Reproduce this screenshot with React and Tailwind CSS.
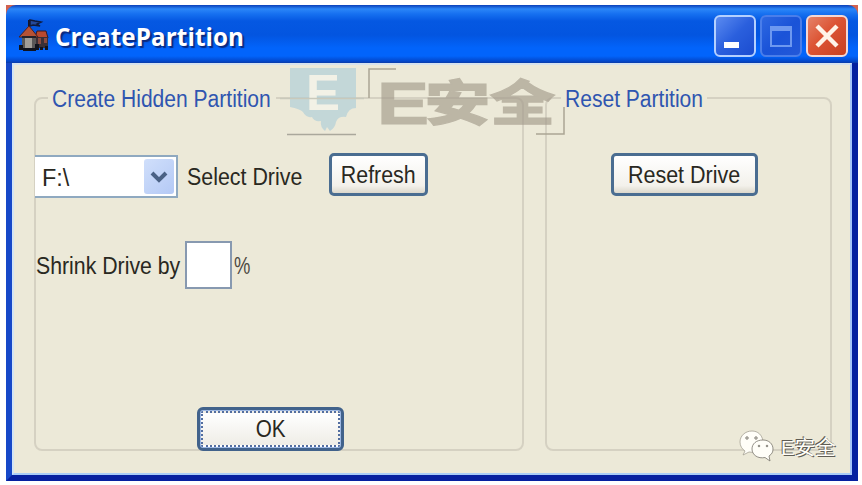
import React from 'react';

const sans = "font-['Liberation_Sans',Arial,sans-serif]";

function Label({ children, className = '' }) {
  return (
    <span className={`inline-block origin-left whitespace-nowrap text-[23px] leading-[26px] ${className}`}>
      {children}
    </span>
  );
}

function CastleIcon() {
  return (
    <svg className="ml-[12px] mt-[13px] h-[34px] w-[32px] shrink-0" viewBox="0 0 32 34">
      <path d="M11 2v8" stroke="#15152c" strokeWidth="2" />
      <path d="M12 2l5 1 6 1-4 2 3 2-7-1-3 1z" fill="#254a9c" stroke="#101a3c" strokeWidth="1.5" />
      <path d="M17 20l2-7h9l2 7z" fill="#b9492f" stroke="#3b1820" />
      <path d="M18 19h12v11H18z" fill="#3a3038" />
      <path d="M20 20h3v6h-3zM26 20h3v5h-3z" fill="#8b4b40" />
      <path d="M11 8l9 11H1z" fill="#b65236" stroke="#4b2023" />
      <path d="M4 19h14v12H4z" fill="#5a5758" />
      <path d="M7 19h7v12H7z" fill="#a29d98" />
      <path d="M4 19h14" stroke="#25222a" strokeWidth="2" />
      <path d="M1 27h4v5H1zM5 30h13v3H5zM17 26h4v6h-4zM22 29h3v3h-3zM27 28h3v4h-3z" fill="#11131e" />
    </svg>
  );
}

function TitleBar() {
  return (
    <header className="flex h-[58px] shrink-0 rounded-t-[10px] bg-[linear-gradient(180deg,#0a3fb8_0px,#2b86f8_4px,#1670f0_9px,#0558e2_16px,#0355e0_30px,#0264fb_43px,#0264fb_51px,#0348cc_56px,#0b3ba8_58px)]">
      <CastleIcon />
      <h1 className="ml-[5px] mt-[14px] inline-block origin-left scale-x-[0.968] whitespace-nowrap font-['Open_Sans',sans-serif] text-[25px] font-bold leading-[34px] tracking-[0.1px] text-white [text-shadow:2px_2px_1px_#0a2a80]">
        CreatePartition
      </h1>
      <div className="ml-auto mr-[10px] mt-[10px] flex gap-[4px]">
        <div className="h-[42px] w-[42px] rounded-[6px] border-2 border-[#b4d0ff] bg-[linear-gradient(135deg,#5b8bf0,#2a5fdd_50%,#1b4cd0)]">
          <svg className="h-[38px] w-[38px]" viewBox="0 0 38 38"><path d="M8 25h15v6H8z" fill="#fff" /></svg>
        </div>
        <div className="h-[42px] w-[42px] rounded-[6px] border-2 border-[#4a7eea] bg-[linear-gradient(135deg,#2d68e2,#1a53d8_50%,#2358d8)]">
          <svg className="h-[38px] w-[38px]" viewBox="0 0 38 38"><path d="M9 10h20v19H9z" fill="none" stroke="#6d98f0" strokeWidth="2" /><path d="M8 9h22v5H8z" fill="#6d98f0" /></svg>
        </div>
        <div className="h-[42px] w-[42px] rounded-[6px] border-2 border-[#f4d8d4] bg-[linear-gradient(135deg,#e58368,#dc5434_45%,#c9401f)]">
          <svg className="h-[38px] w-[38px]" viewBox="0 0 38 38"><path d="M9 9l20 20M29 9L9 29" stroke="#fff4e8" strokeWidth="4.4" /></svg>
        </div>
      </div>
    </header>
  );
}

function Group({ title, className, titleClass, children }) {
  return (
    <section className={`relative h-[354px] rounded-[8px] border-2 border-[#d5d1c2] ${className}`}>
      <h2 className={`absolute -top-[13px] flex h-[26px] bg-[#ece9d8] text-[#2f55b0] ${titleClass}`}>{title}</h2>
      {children}
    </section>
  );
}

function Watermark() {
  return (
    <svg className="pointer-events-none absolute left-[280px] top-[60px] h-[84px] w-[300px]" viewBox="280 60 300 84">
      <path d="M290 68h66v40q-8 0-10 9-8-1-10 5-1 6-6 9l-3-4-2 4q-5-4-4-10-7 1-9-4-6 1-9-5-3-3-13-5z" fill="#a9cbd8" fillOpacity=".62" />
      <path d="M287 134.500h69" stroke="#aaa89c" strokeWidth="1.500" />
      <text x="306" y="110" textLength="34" lengthAdjust="spacingAndGlyphs" fill="#f2f1e6" fontFamily="Liberation Sans, sans-serif" fontWeight="700" fontSize="50">E</text>
      <path d="M274 98.500h90" stroke="#c9c9bb" strokeWidth="1.500" />
      <path d="M369 98V69h27" fill="none" stroke="#aaa594" strokeWidth="1.500" />
      <path d="M564 107v27h-28" fill="none" stroke="#aaa594" strokeWidth="1.500" />
      <g opacity=".65" fill="#a39b8b" stroke="#a39b8b" strokeWidth="1.200">
        <text x="377" y="123.500" textLength="52" lengthAdjust="spacingAndGlyphs" fontFamily="Liberation Sans, sans-serif" fontWeight="700" fontSize="60">E</text>
        <text x="425" y="119.500" textLength="130" lengthAdjust="spacingAndGlyphs" fontFamily="Noto Sans CJK SC, sans-serif" fontWeight="900" fontSize="48">安全</text>
      </g>
    </svg>
  );
}

function AccountBadge() {
  return (
    <div className="absolute left-[738px] top-[428px] flex">
      <svg className="h-[36px] w-[38px]" viewBox="0 0 38 36">
        <g fill="#fffef8" stroke="#a5a194" strokeWidth=".8">
          <path d="M14 3C7 3 2 8 2 14c0 4 2 7 5 9l-2 4 6-3c11 2 15-4 14-11C24 7 20 3 14 3z" />
          <path d="M25 12c-7 0-11 4-11 9 0 6 6 10 13 8.500l5 3.500-1-5c3-2 4-4 4-7 0-5-4-9-10-9z" stroke="#77746b" />
        </g>
        <g fill="#fffef8" stroke="#77746b"><circle cx="9" cy="10" r="1.200" /><circle cx="18" cy="10" r="1.200" /><circle cx="21" cy="18" r=".8" /><circle cx="29" cy="18" r=".8" /></g>
      </svg>
      <span className="ml-[5px] mt-[6px] whitespace-nowrap font-['Liberation_Sans','Noto_Sans_CJK_SC',sans-serif] text-[20.500px] leading-[28px] text-[#fffef8] [text-shadow:-1px_-1px_0_#5f5c54,1px_1px_0_#5f5c54]">E安全</span>
    </div>
  );
}

export default function App() {
  return (
    <div className={`relative h-[485px] w-[862px] overflow-hidden bg-white pl-[6px] pt-[5px] ${sans}`}>
      <div className="flex h-[476px] w-[852px] flex-col bg-[linear-gradient(90deg,#d2624f_0px,#d2624f_10px,#0b3fc0_11px,#0b3fc0_840px,#d2624f_842px)]">
        <TitleBar />
        <main className="flex flex-1 border-b-[6px] border-l-[6px] border-r-[6px] border-b-[#0620a0] border-l-[#1648c8] border-r-[#0420a0]">
          <div className="flex flex-1 border-2 border-t-[#d6e2ee] border-b-[#a8ccf8] border-l-[#d3e4f5] border-r-[#a4c4f8] bg-[#ece9d8] pl-[20px] pt-[32px]">
            <Group title={<Label className="scale-x-[0.915]">Create Hidden Partition</Label>} className="w-[490px]" titleClass="left-[12px] w-[228px] pl-[4px]">
              <div className="mt-[56px] flex h-[43px]">
                <div className="-ml-[1px] flex h-[43px] w-[143px] border-2 border-l-0 border-[#8fa9c0] bg-white p-[2px] pl-[7px]">
                  <Label className="mt-[6px] scale-x-[1.02] text-[#292821]">F:\</Label>
                  <div className="ml-auto flex w-[30px] items-center justify-center rounded-[3px] bg-[linear-gradient(135deg,#d0dffb,#b4c9f5)]">
                    <svg className="h-[14px] w-[20px]" viewBox="0 0 20 14"><path d="M3 3l7 7 7-7" fill="none" stroke="#4a6185" strokeWidth="4" /></svg>
                  </div>
                </div>
                <Label className="ml-[9px] mt-[9px] w-[115px] scale-x-[0.93] text-[#292821]">Select Drive</Label>
                <button className="-mt-[2px] ml-[27px] flex h-[43px] w-[99px] justify-center rounded-[5px] border-[3px] border-[#4a6d91] bg-[linear-gradient(180deg,#fff,#f3f1eb_80%,#dcd8cc)] pt-[6px]">
                  <Label className="!origin-center scale-x-[0.93] text-[#292821]">Refresh</Label>
                </button>
              </div>
              <div className="mt-[43px] flex h-[48px]">
                <Label className="mt-[12px] w-[149px] scale-x-[0.925] text-[#292821]">Shrink Drive by</Label>
                <div className="h-[48px] w-[47px] border-2 border-[#8799b0] bg-white" />
                <Label className="ml-[2px] mt-[12px] scale-x-[0.8] text-[#4c4a43]">%</Label>
              </div>
              <button className="ml-[161px] mt-[118px] block h-[44px] w-[147px] rounded-[6px] border-[3px] border-[#41628b] bg-[#9db8e3] p-[1px]">
                <span className="flex h-full justify-center rounded-[2px] border-2 border-dotted border-[#536ea0] bg-[linear-gradient(180deg,#fff,#efede6)] pt-[3px]">
                  <Label className="!origin-center scale-x-[0.9] text-[#292821]">OK</Label>
                </span>
              </button>
            </Group>
            <Group title={<Label className="scale-x-[0.915]">Reset Partition</Label>} className="ml-[21px] w-[287px]" titleClass="left-[14px] w-[146px] pl-[4px]">
              <button className="ml-[64px] mt-[54px] flex h-[43px] w-[147px] justify-center rounded-[5px] border-[3px] border-[#4a6d91] bg-[linear-gradient(180deg,#fff,#f3f1eb_80%,#dcd8cc)] pt-[6px]">
                <Label className="!origin-center scale-x-[0.935] text-[#292821]">Reset Drive</Label>
              </button>
            </Group>
          </div>
        </main>
      </div>
      <Watermark />
      <AccountBadge />
    </div>
  );
}
